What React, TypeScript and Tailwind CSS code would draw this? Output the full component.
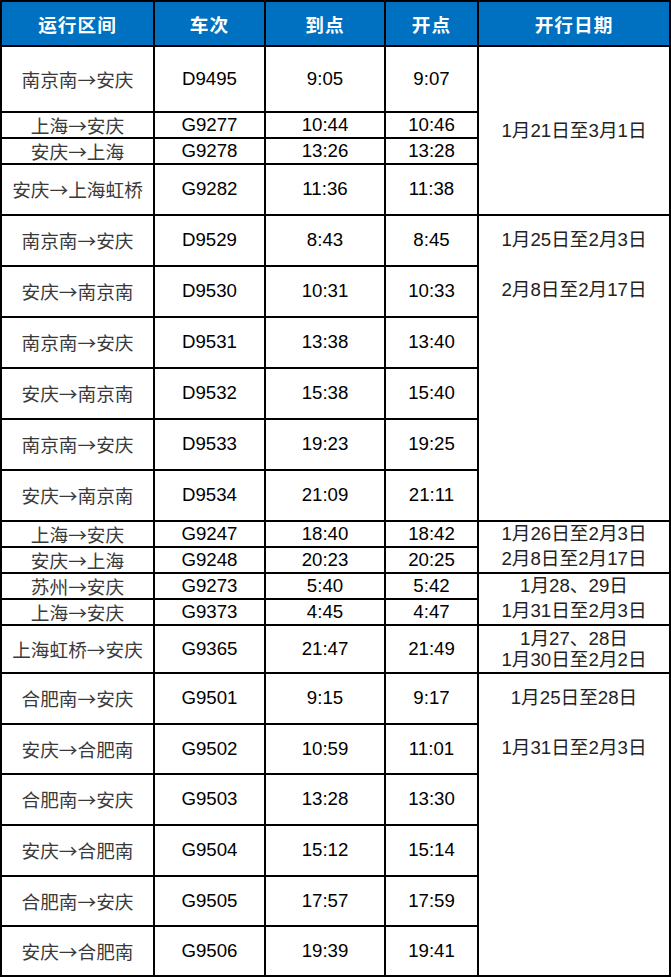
import React from "react";

type Row = [string, string, string, string, number];

const rows: Row[] = [
  ["南京南→安庆", "D9495", "9:05", "9:07", 66],
  ["上海→安庆", "G9277", "10:44", "10:46", 26],
  ["安庆→上海", "G9278", "13:26", "13:28", 26],
  ["安庆→上海虹桥", "G9282", "11:36", "11:38", 51],
  ["南京南→安庆", "D9529", "8:43", "8:45", 51],
  ["安庆→南京南", "D9530", "10:31", "10:33", 51],
  ["南京南→安庆", "D9531", "13:38", "13:40", 51],
  ["安庆→南京南", "D9532", "15:38", "15:40", 51],
  ["南京南→安庆", "D9533", "19:23", "19:25", 51],
  ["安庆→南京南", "D9534", "21:09", "21:11", 51],
  ["上海→安庆", "G9247", "18:40", "18:42", 26],
  ["安庆→上海", "G9248", "20:23", "20:25", 26],
  ["苏州→安庆", "G9273", "5:40", "5:42", 26],
  ["上海→安庆", "G9373", "4:45", "4:47", 26],
  ["上海虹桥→安庆", "G9365", "21:47", "21:49", 48],
  ["合肥南→安庆", "G9501", "9:15", "9:17", 51],
  ["安庆→合肥南", "G9502", "10:59", "11:01", 50],
  ["合肥南→安庆", "G9503", "13:28", "13:30", 51],
  ["安庆→合肥南", "G9504", "15:12", "15:14", 51],
  ["合肥南→安庆", "G9505", "17:57", "17:59", 50],
  ["安庆→合肥南", "G9506", "19:39", "19:41", 50],
];

type DateCell = { span: number; mode: "center" | "top"; lines: string[]; heights?: number[] };

const dateCells: Record<number, DateCell> = {
  0: { span: 4, mode: "center", lines: ["1月21日至3月1日"] },
  4: { span: 6, mode: "top", lines: ["1月25日至2月3日", "2月8日至2月17日"], heights: [49, 51] },
  10: { span: 2, mode: "top", lines: ["1月26日至2月3日", "2月8日至2月17日"], heights: [24, 26] },
  12: { span: 2, mode: "top", lines: ["1月28、29日", "1月31日至2月3日"], heights: [24, 26] },
  14: { span: 1, mode: "center", lines: ["1月27、28日", "1月30日至2月2日"] },
  15: { span: 6, mode: "top", lines: ["1月25日至28日", "1月31日至2月3日"], heights: [49, 51] },
};

const cjk = { fontFamily: '"Noto Sans CJK SC", "Liberation Serif", serif' };
const latin = { fontFamily: '"Liberation Sans", "Noto Sans CJK SC", sans-serif' };

export default function App() {
  return (
    <div className="bg-white w-[671px] h-[977px]">
      <table className="table-fixed border-collapse w-[671px] border-2 border-black">
        <colgroup>
          <col className="w-[153px]" />
          <col className="w-[111px]" />
          <col className="w-[120px]" />
          <col className="w-[93px]" />
          <col className="w-[192px]" />
        </colgroup>
        <thead>
          <tr className="h-[45px]">
            {["运行区间", "车次", "到点", "开点", "开行日期"].map((h) => (
              <th
                key={h}
                style={cjk}
                className="border-2 border-black bg-[#0070c0] text-white font-bold text-[18.67px] text-center align-middle p-0 tracking-[1px]"
              >
                {h}
              </th>
            ))}
          </tr>
        </thead>
        <tbody>
          {rows.map((r, i) => {
            const d = dateCells[i];
            return (
              <tr key={i} style={{ height: r[4] }}>
                <td style={cjk} className="border-2 border-black text-center align-middle p-0 text-[18.67px] text-[#3a3a3a] leading-none whitespace-nowrap">
                  {r[0]}
                </td>
                <td style={latin} className="border-2 border-black text-center align-middle p-0 text-[18.67px] text-black leading-none">
                  {r[1]}
                </td>
                <td style={latin} className="border-2 border-black text-center align-middle p-0 text-[18.67px] text-black leading-none">
                  {r[2]}
                </td>
                <td style={latin} className="border-2 border-black text-center align-middle p-0 text-[18.67px] text-black leading-none">
                  {r[3]}
                </td>
                {d && (
                  <td
                    rowSpan={d.span}
                    style={latin}
                    className={
                      "border-2 border-black text-center p-0 text-[18.67px] text-[#222] whitespace-nowrap " +
                      (d.mode === "top" ? "align-top" : "align-middle")
                    }
                  >
                    {d.mode === "top" ? (
                      <div className="flex flex-col">
                        {d.lines.map((l, k) => (
                          <div key={k} className="flex items-center justify-center leading-none" style={{ height: d.heights![k] }}>
                            {l}
                          </div>
                        ))}
                      </div>
                    ) : (
                      <div className="flex flex-col items-center justify-center leading-[21px]">
                        {d.lines.map((l, k) => (
                          <div key={k}>{l}</div>
                        ))}
                      </div>
                    )}
                  </td>
                )}
              </tr>
            );
          })}
        </tbody>
      </table>
    </div>
  );
}
